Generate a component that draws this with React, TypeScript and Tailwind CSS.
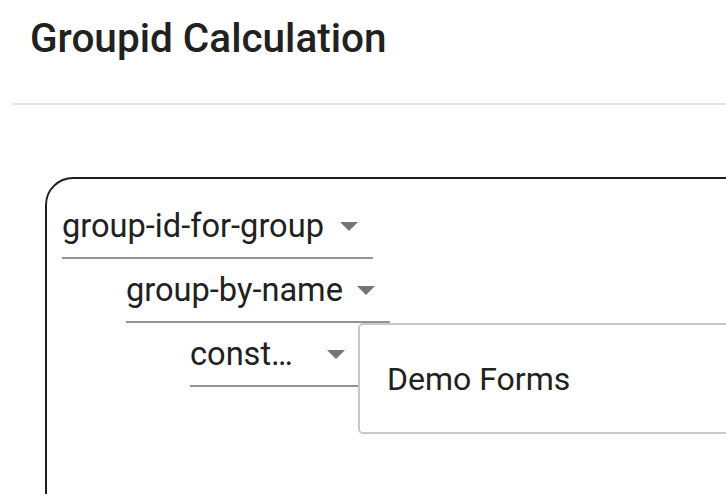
const ROBOTO = { fontFamily: "Roboto, 'Noto Sans', Arial, sans-serif" };

function ArrowDrop() {
  return (
    <svg viewBox="7 10 10 5" className="ml-auto h-[9px] w-[18px] shrink-0 fill-[#757575]">
      <path d="M7 10l5 5 5-5z" />
    </svg>
  );
}

function SelectField({
  value,
  width,
  textWidth,
}: {
  value: string;
  width: string;
  textWidth?: string;
}) {
  return (
    <div
      className={`flex h-[64px] shrink-0 items-center border-b-2 border-[#929292] pr-[15px] ${width}`}
    >
      <span
        className={`min-w-0 truncate text-[32.6px] leading-[39px] text-[#212121] ${textWidth ?? ""}`}
      >
        {value}
      </span>
      <ArrowDrop />
    </div>
  );
}

export default function App() {
  return (
    <div className="h-[494px] w-[726px] overflow-hidden bg-white" style={ROBOTO}>
      <header className="px-[30px] pt-[15px]">
        <h1 className="text-[40.5px] font-medium leading-[46px] text-[#212121]">
          Groupid Calculation
        </h1>
      </header>

      <div className="ml-[12px] mt-[42px] h-[2px] bg-[#e4e4e4]" />

      <section className="ml-[45px] mt-[72px] h-[400px] w-[760px] rounded-tl-[28px] border-2 border-[#1f1f1f] pl-[15px] pt-[16px]">
        <SelectField value="group-id-for-group" width="w-[311px]" />

        <div className="pl-[64px]">
          <SelectField value="group-by-name" width="w-[264px]" />

          <div className="flex items-start pl-[64px]">
            <SelectField value="constant" width="w-[170px]" textWidth="w-[110px]" />
            <div className="-ml-[2px] flex h-[111px] w-[400px] items-center rounded-[5px] border-2 border-[#c8c8c8] pl-[27px]">
              <span className="text-[32px] leading-[36px] text-[#212121]">Demo Forms</span>
            </div>
          </div>
        </div>
      </section>
    </div>
  );
}
